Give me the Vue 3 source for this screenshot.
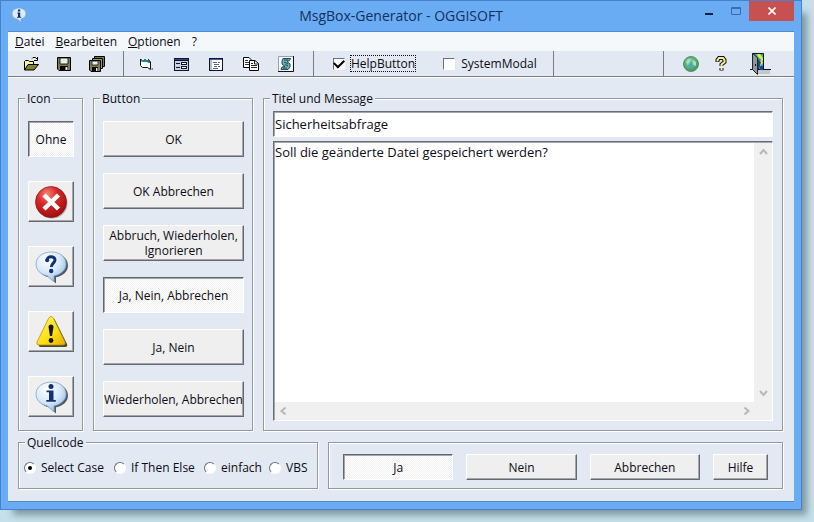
<script setup>
import { ref } from 'vue'

const menus = [
  { key: 'D', rest: 'atei' },
  { key: 'B', rest: 'earbeiten' },
  { key: 'O', rest: 'ptionen' },
  { key: '', rest: '?' },
]
const icons = [
  { id: 'none', label: 'Ohne' },
  { id: 'error', label: 'Fehler' },
  { id: 'question', label: 'Frage' },
  { id: 'warning', label: 'Warnung' },
  { id: 'info', label: 'Information' },
]
const buttonSets = [
  'OK',
  'OK Abbrechen',
  'Abbruch, Wiederholen, Ignorieren',
  'Ja, Nein, Abbrechen',
  'Ja, Nein',
  'Wiederholen, Abbrechen',
]
const sources = ['Select Case', 'If Then Else', 'einfach', 'VBS']
const answers = ['Ja', 'Nein', 'Abbrechen', 'Hilfe']

const icon = ref('none')
const buttonSet = ref('Ja, Nein, Abbrechen')
const source = ref('Select Case')
const answer = ref('Ja')
const helpButton = ref(true)
const systemModal = ref(false)
const title = ref('Sicherheitsabfrage')
const message = ref('Soll die geänderte Datei gespeichert werden?')
</script>

<template>
  <div class="desktop">
    <div class="window">
      <header class="titlebar">
        <svg class="app-icon" viewBox="0 0 16 16" aria-hidden="true">
          <path d="M8 1C3.800 1 1 3.300 1 6.800c0 3.200 2.500 5 5.500 5.500L10 15.500v-3.400c3-.7 5-2.500 5-5.300C15 3.300 12.200 1 8 1z" fill="#dcebfb" stroke="#7f9dc4" stroke-width=".8" />
          <path d="M6.500 5.500h2.700v4.300h1v1H6v-1h1v-3.300h-.8zM7 2.600h2.200v1.900H7z" fill="#14306c" />
        </svg>
        <h1>MsgBox-Generator - OGGISOFT</h1>
        <div class="controls">
          <button class="ctl" aria-label="Minimieren"><svg width="10" height="12" viewBox="0 0 10 12"><path d="M1 8h8v2H1z" fill="#0d2140" /></svg></button>
          <button class="ctl" aria-label="Maximieren"><svg width="10" height="8" viewBox="0 0 10 8"><path d="M.5.500h9v7h-9zM0 1.500h10" fill="none" stroke="#3c6bae" /></svg></button>
          <button class="ctl close" aria-label="Schließen"><svg width="8" height="8" viewBox="0 0 8 8"><path d="M.5.500l7 7m0-7l-7 7" stroke="#fff" stroke-width="1.600" /></svg></button>
        </div>
      </header>

      <div class="client">
        <nav class="menu">
          <a v-for="m in menus" :key="m.rest" href="#"><u>{{ m.key }}</u>{{ m.rest }}</a>
        </nav>

        <div class="toolbar">
          <div class="tools files">
            <button aria-label="Öffnen">
              <svg viewBox="0 0 16 16">
                <path d="M1 14V5h1V4h3v1h6v3" fill="#f5f2a0" />
                <path d="M1.500 14V5.500l1-1h3l1 1h4V8" fill="none" stroke="#000" />
                <path d="M5 8.500h10.500L11 14H1.500z" fill="#84842a" stroke="#000" />
                <path d="M9 2.500l1-1h2.500L14 3M14.500 1v3.500H11" fill="none" stroke="#000" />
              </svg>
            </button>
            <button aria-label="Speichern">
              <svg viewBox="0 0 16 16">
                <path d="M1.500 1.500h13v13H3l-1.500-1.500z" fill="#7c8048" stroke="#000" />
                <path d="M4 2h8v6H4z" fill="#e8ecee" stroke="#000" stroke-width=".8" />
                <path d="M4 10h8v4.500H4z" fill="#000" /><path d="M9.500 11h2v3h-2z" fill="#e8ecee" />
              </svg>
            </button>
            <button aria-label="Alle speichern">
              <svg viewBox="0 0 16 16">
                <path d="M5.500.500h10v10h-10z" fill="#7c8048" stroke="#000" />
                <path d="M3.500 2.500h10v10h-10z" fill="#9a9d60" stroke="#000" />
                <path d="M.5 4.500h11v11H2l-1.500-1.500z" fill="#7c8048" stroke="#000" />
                <path d="M3 5h6v4H3z" fill="#e8ecee" stroke="#000" stroke-width=".7" />
                <path d="M3 11h6v4H3z" fill="#000" /><path d="M7 12h1.500v3H7z" fill="#e8ecee" />
              </svg>
            </button>
          </div>
          <div class="tools code">
            <button aria-label="Modul">
              <svg viewBox="0 0 16 16">
                <path d="M2.500 3.500h8l2 3v7l-2-2h-6l-2-2z" fill="#f6fcfc" />
                <path d="M2 3h2v1h2V3h2v1h2V3h1v2h1v2h-1L9 6H5L2 5z" fill="#2d7f86" />
                <path d="M2.500 3v6.500l2 2h5l3 2V6l-2-2.500" fill="none" stroke="#111" />
                <path d="M13.500 12h1.500v2h-1.500z" fill="#7d858f" />
              </svg>
            </button>
            <button aria-label="Formular">
              <svg viewBox="0 0 16 16" shape-rendering="crispEdges">
                <path d="M1 2h15v13H1z" fill="#0c1230" /><path d="M2 5h13v9H2z" fill="#cdd3df" />
                <path d="M2 3h13v1H2z" fill="#3a4778" />
                <path d="M3 7h4v1H3zM3 11h4v1H3zM8 6h6v3H8zM8 10h6v3H8z" fill="#0c1230" />
                <path d="M9 7h4v1H9zM9 11h4v1H9z" fill="#fff" />
              </svg>
            </button>
            <button aria-label="Liste">
              <svg viewBox="0 0 16 16" shape-rendering="crispEdges">
                <path d="M1 2h14v13H1z" fill="#0c1230" /><path d="M2 4h12v10H2z" fill="#fff" />
                <path d="M2 3h12v1H2z" fill="#4a5da8" /><path d="M2 4h2v10H2z" fill="#b4bed2" />
                <path d="M5 6h4v1H5zM10 6h2v1h-2zM6 8h5v1H6zM6 10h3v1H6zM10 10h2v1h-2zM5 12h5v1H5z" fill="#59647a" />
              </svg>
            </button>
            <button aria-label="Kopieren">
              <svg viewBox="0 0 16 16">
                <path d="M.5 1.500h5.500l2.500 2.500v7.500h-8z" fill="#fff" stroke="#000" />
                <path d="M2 4.500h3M2 6.500h5M2 8.500h5" stroke="#333" />
                <path d="M6.500 4.500H12l3.500 3v7h-9z" fill="#fff" stroke="#000" />
                <path d="M11.500 4.500v3.500h4M8 7.500h2M8 9.500h6M8 11.500h6" fill="none" stroke="#222" />
              </svg>
            </button>
            <button aria-label="Skript">
              <svg viewBox="0 0 16 16">
                <path d="M.5.500h15v15H.5z" fill="#f4f8f8" stroke="#98a0a8" />
                <path d="M0 15.500h15.500V0" fill="none" stroke="#111" />
                <path d="M5 2.500h7.500l-1 2-2.500 1 3 2.500v3l-2 2.500H3l1-2.500 3-.500L4 8V5z" fill="#6fb4b8" stroke="#143a44" stroke-width=".9" />
                <path d="M6 4h4M6 6l4 2M7 8.500l3 1.500M5 12h4" stroke="#143a44" stroke-width=".9" />
              </svg>
            </button>
          </div>
          <div class="tools checks">
            <label><input v-model="helpButton" type="checkbox"><span class="focused">HelpButton</span></label>
            <label><input v-model="systemModal" type="checkbox"><span>SystemModal</span></label>
          </div>
          <div class="tools spacer"></div>
          <div class="tools extra">
            <button aria-label="Web">
              <svg viewBox="0 0 16 16">
                <defs><radialGradient id="globe" cx=".45" cy=".4"><stop offset="0" stop-color="#8fd6c8" /><stop offset=".6" stop-color="#62b98c" /><stop offset="1" stop-color="#4a9a62" /></radialGradient></defs>
                <circle cx="8" cy="8" r="7.500" fill="url(#globe)" stroke="#5b8f6c" />
                <path d="M3 6c1-3 4-4 5-3l-2 3-1 3zM10 4l3 2v4l-3-1z" fill="#a8e2ae" /><path d="M8 5l3 5-3 2-3-2z" fill="#4fa6b4" />
              </svg>
            </button>
            <button aria-label="Hilfe">
              <svg viewBox="0 0 16 16">
                <path d="M4.500 6V4l1.500-2h4l1.500 2v2L8.500 8.500V10M8.500 12v2.500" fill="none" stroke="#111" stroke-width="4" />
                <path d="M4.500 5.500V4l1.500-2h4l1.500 2v2L8.500 8.500V10M8.500 12v2" fill="none" stroke="#f3f08c" stroke-width="2" />
              </svg>
            </button>
            <button class="exit" aria-label="Beenden">
              <svg viewBox="0 0 22 24">
                <path d="M7 18h13v4H7z" fill="#c3c7cd" /><path d="M0 17.500h21" stroke="#111" />
                <path d="M2.500 1.500h11v16h-11z" fill="#27a7b0" stroke="#111" />
                <path d="M7 2h3l3 4v3L8 5zM9 9l3-1 1 3-3 3z" fill="#e5e93c" />
                <path d="M8 7l3 3-2 7H7zM10 14h3v4h-3z" fill="#1c4595" />
                <path d="M2.500 1.500l5 4v17l-5-5z" fill="#8e979c" stroke="#222" /><path d="M5.500 12v2" stroke="#111" />
              </svg>
            </button>
          </div>
        </div>

        <main class="content">
          <div class="row top">
            <fieldset class="group icons">
              <legend>Icon</legend>
              <button
                v-for="i in icons" :key="i.id" class="btn icon-btn" :class="{ pressed: icon === i.id, text: i.id === 'none' }"
                :aria-label="i.label" :aria-pressed="icon === i.id" @click="icon = i.id"
              >
                <span v-if="i.id === 'none'">Ohne</span>
                <svg v-else-if="i.id === 'error'" viewBox="0 0 34 34">
                  <defs><radialGradient id="red" cx=".38" cy=".25" r=".8"><stop offset="0" stop-color="#ee8a7c" /><stop offset=".4" stop-color="#d82a24" /><stop offset="1" stop-color="#9c0a10" /></radialGradient></defs>
                  <circle cx="18" cy="18" r="15.500" fill="#6a6a70" opacity=".5" />
                  <circle cx="17" cy="17" r="15.500" fill="url(#red)" stroke="#8c1015" stroke-width=".7" />
                  <path d="M10 10l14.500 14M24.500 10L10 24" stroke="#fff" stroke-width="4.500" />
                </svg>
                <svg v-else-if="i.id === 'warning'" viewBox="0 0 34 34">
                  <defs><linearGradient id="yellow" x2="1" y2="1"><stop offset="0" stop-color="#fff56a" /><stop offset=".6" stop-color="#fbdf10" /><stop offset="1" stop-color="#e8a800" /></linearGradient></defs>
                  <path d="M18.500 3q1.500 0 2.500 2l12 24q1 3-2 3H7q-3 0-2-3L16 5q1-2 2.500-2z" fill="#444" />
                  <path d="M17 1.500q1.500 0 2.500 2L31 27q1 3-2 3H5q-3 0-2-3L14.500 3.500q1-2 2.500-2z" fill="url(#yellow)" stroke="#b8930c" stroke-width=".8" />
                  <path d="M14.500 12q0-2.500 2.500-2.500t2.500 2.500l-1.500 9h-2z" fill="#151515" /><circle cx="17" cy="25.500" r="2.400" fill="#151515" />
                </svg>
                <svg v-else viewBox="0 0 34 34">
                  <defs><radialGradient id="bubble" cx=".38" cy=".25" r=".85"><stop offset="0" stop-color="#fff" /><stop offset=".5" stop-color="#d7e9fa" /><stop offset="1" stop-color="#87b1df" /></radialGradient></defs>
                  <path d="M19 3.500C10 3.500 4 8.500 4 15.500c0 6 4.500 10.500 11 11.800l7 6.200v-6.200c7-1.300 12-5.800 12-11.800 0-7-6-12-15-12z" fill="#4f5966" />
                  <path d="M17.500 2C8.500 2 2 7 2 14c0 6 4.500 10.500 11 11.800l7 6.200v-6.200c7-1.300 12-5.800 12-11.800 0-7-6-12-14.500-12z" fill="url(#bubble)" stroke="#88a3c2" stroke-width=".8" />
                  <template v-if="i.id === 'question'">
                    <path d="M13 10.500C13 5.500 21 5.500 21 10c0 3-3.700 3.300-3.700 7" fill="none" stroke="#123278" stroke-width="3" />
                    <circle cx="13.200" cy="10.300" r="2" fill="#123278" /><circle cx="17.200" cy="21" r="2.200" fill="#123278" />
                  </template>
                  <template v-else>
                    <circle cx="17" cy="6.500" r="2.500" fill="#123278" />
                    <path d="M12.500 10.500h7v9.500h2.300v1.800h-9.500V20h2.700v-7.700h-2.500z" fill="#123278" />
                  </template>
                </svg>
              </button>
            </fieldset>

            <fieldset class="group sets">
              <legend>Button</legend>
              <button
                v-for="b in buttonSets" :key="b" class="btn" :class="{ pressed: buttonSet === b }"
                :aria-pressed="buttonSet === b" @click="buttonSet = b"
              >{{ b }}</button>
            </fieldset>

            <fieldset class="group texts">
              <legend>Titel und Message</legend>
              <input v-model="title" class="sunken title-input" type="text" aria-label="Titel">
              <div class="sunken memo">
                <textarea v-model="message" aria-label="Message"></textarea>
                <div class="vscroll">
                  <svg viewBox="0 0 9 8"><path d="M1 6l3.500-4L8 6" /></svg>
                  <svg viewBox="0 0 9 8"><path d="M1 2l3.500 4L8 2" /></svg>
                </div>
                <div class="hscroll">
                  <svg viewBox="0 0 9 8"><path d="M6.500 0.500L2.500 4l4 3.500" /></svg>
                  <svg viewBox="0 0 9 8"><path d="M2.500 0.500L6.500 4l-4 3.500" /></svg>
                </div>
              </div>
            </fieldset>
          </div>

          <div class="row bottom">
            <fieldset class="group source">
              <legend>Quellcode</legend>
              <label v-for="s in sources" :key="s"><input v-model="source" type="radio" name="source" :value="s"><span>{{ s }}</span></label>
            </fieldset>
            <div class="group answers">
              <button
                v-for="a in answers" :key="a" class="btn" :class="{ pressed: answer === a }"
                :aria-pressed="answer === a" @click="answer = a"
              >{{ a }}</button>
            </div>
          </div>
        </main>
      </div>
    </div>
  </div>
</template>

<style>
body {
  margin: 0;
  background: #c6e0ea;
}
</style>

<style scoped>
* {
  box-sizing: border-box;
}
.desktop {
  display: flex;
  min-height: 100vh;
  padding: 0 12px 12px 0;
  background: #c6e0ea;
  font: 12px/15px "Open Sans", "Noto Sans", sans-serif;
  color: #0c0c14;
}
.window {
  flex: 1;
  display: flex;
  flex-direction: column;
  padding: 0 7px 7px;
  border: 1px solid #4581cc;
  background: #6aacf4;
  box-shadow: 9px 9px 7px -4px #7f959f;
}
button,
input,
textarea {
  font: inherit;
  color: inherit;
  margin: 0;
}
.titlebar {
  display: grid;
  grid-template-columns: 100px 1fr 100px;
  height: 30px;
}
.app-icon {
  width: 16px;
  height: 16px;
  margin: 6px 0 0 3px;
}
h1 {
  margin: 0;
  font-size: 14px;
  font-weight: 400;
  line-height: 30px;
  text-align: center;
  color: #12305a;
}
.controls {
  display: flex;
  justify-content: flex-end;
}
.ctl {
  display: grid;
  place-items: center;
  width: 27px;
  height: 20px;
  padding: 0;
  border: 0;
  background: none;
}
.ctl.close {
  width: 45px;
  background: #c75050;
}
.client {
  flex: 1;
  display: flex;
  flex-direction: column;
  border: 1px solid #4c8ad2;
  border-width: 1px 0;
  background: #e3e9f3;
}
.menu {
  display: flex;
  gap: 11px;
  height: 19px;
  padding: 2px 7px;
  background: #f4f8fb;
}
.menu a {
  color: inherit;
  text-decoration: none;
}
.toolbar {
  display: grid;
  grid-template-columns: 115px 190px 240px 110px 1fr;
  height: 26px;
  border-bottom: 1px solid #767d87;
  box-shadow: 0 1px #fff;
}
.tools {
  display: flex;
  align-items: center;
  border-left: 1px solid #767d87;
}
.tools button {
  width: 16px;
  height: 16px;
  padding: 0;
  border: 0;
  background: none;
}
.tools svg {
  display: block;
  width: 100%;
  height: 100%;
}
.files {
  gap: 17px;
  padding-left: 15px;
  border-left: 0;
}
.code {
  gap: 19px;
  padding-left: 14px;
}
.checks {
  gap: 28px;
  padding-left: 19px;
}
.extra {
  gap: 14px;
  padding-left: 19px;
}
.extra .exit {
  width: 22px;
  height: 24px;
  margin-left: 7px;
}
label {
  display: flex;
  align-items: center;
  gap: 6px;
  white-space: nowrap;
}
.focused {
  outline: 1px dotted #111;
}
input[type="checkbox"],
input[type="radio"] {
  appearance: none;
  display: grid;
  place-items: center;
  flex: none;
  width: 12px;
  height: 12px;
  border: 1px solid;
  border-color: #6c7278 #fff #fff #6c7278;
  background: #fff;
}
input[type="radio"] {
  border-radius: 50%;
}
input[type="radio"]:checked::before {
  content: "";
  width: 4px;
  height: 4px;
  border-radius: 50%;
  background: #000;
}
input[type="checkbox"]:checked::before {
  content: "";
  width: 8px;
  height: 5px;
  border: solid #000;
  border-width: 0 0 2px 2px;
  transform: translateY(-1px) rotate(-45deg);
}
.content {
  flex: 1;
  display: flex;
  flex-direction: column;
  gap: 4px;
  padding: 14px 11px 12px 10px;
}
.row {
  display: flex;
  gap: 10px;
}
.top {
  flex: 1;
}
.group {
  min-width: 0;
  margin: 0;
  padding: 0;
  border: 1px solid #8e99a5;
  box-shadow: 1px 1px #fff, inset 1px 1px #fff;
}
legend {
  margin-left: -3px;
  padding: 0 2px;
  background: #e3e9f3;
}
.icons,
.sets {
  display: flex;
  flex-direction: column;
}
.icons {
  width: 65px;
  padding: 15px 8px 0 9px;
  gap: 24px;
}
.sets {
  width: 160px;
  padding: 15px 8px 0 9px;
  gap: 16px;
}
.btn {
  padding: 0;
  border: 1px solid;
  border-color: #fff #646a70 #646a70 #fff;
  box-shadow: inset -1px -1px #a3a6aa;
  background: #efefef;
}
.btn.pressed {
  border-color: #62676d #fff #fff #62676d;
  box-shadow: inset 1px 1px #a3a6aa;
  background: repeating-conic-gradient(#fff 0 25%, #f0f0f0 0 50%) 0 0 / 2px 2px;
}
.icon-btn {
  display: grid;
  place-items: center;
  height: 41px;
}
.icon-btn.text {
  height: 36px;
}
.icon-btn svg {
  width: 34px;
  height: 34px;
}
.sets .btn {
  height: 36px;
}
.texts {
  flex: 1;
  display: flex;
  flex-direction: column;
  gap: 4px;
  padding: 5px 9px 9px;
}
.sunken {
  border: 1px solid;
  border-color: #696e74 #fff #fff #696e74;
  box-shadow: inset 1px 1px #a3a6aa;
  background: #fff;
}
.title-input {
  width: 100%;
  height: 26px;
  padding: 0 1px;
  border-radius: 0;
  font-size: 13px;
}
.memo {
  display: grid;
  grid-template-columns: 1fr 18px;
  grid-template-rows: 1fr 18px;
  height: 280px;
  padding: 1px 0 0 1px;
}
textarea {
  padding: 2px 0;
  border: 0;
  background: none;
  resize: none;
  overflow: hidden;
  font-size: 13px;
}
.vscroll,
.hscroll {
  display: flex;
  align-items: center;
  justify-content: space-between;
  background: #f0f0f0;
}
.vscroll {
  flex-direction: column;
  padding: 5px 0;
}
.hscroll {
  grid-column: 1 / -1;
  padding: 0 21px 0 4px;
}
.memo svg {
  width: 9px;
  height: 8px;
  fill: none;
  stroke: #b8b8b8;
  stroke-width: 2;
}
.source {
  display: grid;
  grid-template-columns: 90px 90px 65px 1fr;
  width: 300px;
  padding: 10px 0 13px 5px;
}
.source legend {
  margin-left: 1px;
}
.source label {
  gap: 5px;
}
.answers {
  flex: 1;
  display: flex;
  align-items: center;
  gap: 13px;
  margin-top: 7px;
  padding: 3px 14px 0;
}
.answers .btn {
  flex: 1;
  height: 26px;
}
.answers .btn:last-child {
  flex: none;
  width: 55px;
}
</style>
